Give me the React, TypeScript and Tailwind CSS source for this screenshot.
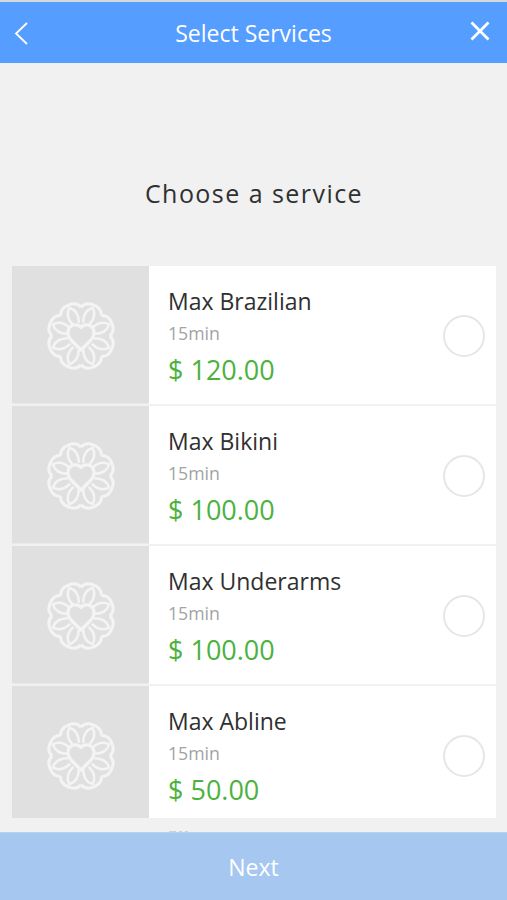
import React from 'react';

interface Service {
  name: string;
  duration: string;
  price: string;
}

const services: Service[] = [
  { name: 'Max Brazilian', duration: '15min', price: '$ 120.00' },
  { name: 'Max Bikini', duration: '15min', price: '$ 100.00' },
  { name: 'Max Underarms', duration: '15min', price: '$ 100.00' },
  { name: 'Max Abline', duration: '15min', price: '$ 50.00' },
];

const petals = [22.5, 67.5, 112.5, 157.5, 202.5, 247.5, 292.5, 337.5];

const FlowerLogo = () => (
  <svg viewBox="-36 -36 72 72" className="size-[72px] text-[#f4f4f4]" fill="none" stroke="currentColor" strokeLinejoin="round">
    {petals.map((angle) => (
      <g key={angle} transform={`rotate(${angle})`}>
        {/* scalloped edge */}
        <path d="M-11 -26.6 C-9.5 -31.5 -5 -33.4 0 -33.4 C5 -33.4 9.5 -31.5 11 -26.6" strokeWidth="3" />
        {/* petal loop */}
        <path d="M-3 -13 C-5.5 -19 -5.5 -26 0 -30.5 C5.5 -26 5.5 -19 3 -13" strokeWidth="2.5" />
      </g>
    ))}
    <path
      d="M0 14 L-9.5 4.5 C-15 -1.5 -13.5 -9 -8 -10.8 C-4.5 -11.5 -1.5 -10.5 0 -8.5 C1.5 -10.5 4.5 -11.5 8 -10.8 C13.5 -9 15 -1.5 9.5 4.5 Z"
      fill="#e0e0e0"
      strokeWidth="3.2"
    />
  </svg>
);

const ServiceRow: React.FC<{ service: Service }> = ({ service }) => (
  <li className="flex h-[138px] shrink-0 bg-white">
    <div className="flex w-[137px] shrink-0 items-center justify-center border-b border-[#e9e9e9] bg-[#e0e0e0] pl-px pt-[3px]">
      <FlowerLogo />
    </div>
    <div className="flex-1 pl-[19px] pt-5">
      <h3 className="text-[23px] leading-[30px] text-[#303030]">{service.name}</h3>
      <p className="mt-[6px] text-[17.7px] leading-[22px] text-[#a0a4a5]">{service.duration}</p>
      <p className="mt-[8px] text-[27px] leading-[36px] text-[#4bb23d]">{service.price}</p>
    </div>
    <div className="flex items-center pr-[11px] pt-px">
      <button aria-label={service.name} className="size-[42px] rounded-full border-2 border-[#e6e6e6] bg-white" />
    </div>
  </li>
);

export default function App() {
  return (
    <div className="flex h-[900px] w-[507px] flex-col overflow-hidden bg-[#f1f1f1] font-['Open_Sans','Noto_Sans',sans-serif]">
      <header className="flex h-[63px] shrink-0 items-center justify-between border-t-2 border-[#d5d8d8] bg-[#559dff] pl-[14px] pr-[17px] text-white">
        <svg width="14" height="24" viewBox="0 0 14 24" fill="none" stroke="currentColor" strokeWidth="1.8">
          <path d="M13 2 L2 12.5 L13 23" />
        </svg>
        <h1 className="pl-[9px] text-[23px] leading-8">Select Services</h1>
        <svg width="20" height="20" viewBox="0 0 20 20" className="-mt-[3px]" fill="none" stroke="currentColor" strokeWidth="2.8">
          <path d="M1.5 1.5 L18.5 18.5 M18.5 1.5 L1.5 18.5" />
        </svg>
      </header>

      <h2 className="mt-[112px] shrink-0 pl-px text-center text-[25px] leading-9 tracking-[1.45px] text-[#303030]">Choose a service</h2>

      <ul className="ml-3 mr-[11px] mt-[55px] flex h-[552px] shrink-0 flex-col gap-[2px] overflow-hidden">
        {services.map((service) => (
          <ServiceRow key={service.name} service={service} />
        ))}
      </ul>

      <div className="flex h-[14px] shrink-0 items-end gap-[3px] pl-[169px]">
        <span className="h-px w-[7px] bg-[#cfcfcf]" />
        <span className="h-px w-[3px] bg-[#cfcfcf]" />
        <span className="h-px w-[3px] bg-[#cfcfcf]" />
      </div>

      <button className="h-[68px] w-full shrink-0 border-t border-[#b5cfee] bg-[#a6c7f0] pt-[2px] text-[23px] text-white">Next</button>
    </div>
  );
}
